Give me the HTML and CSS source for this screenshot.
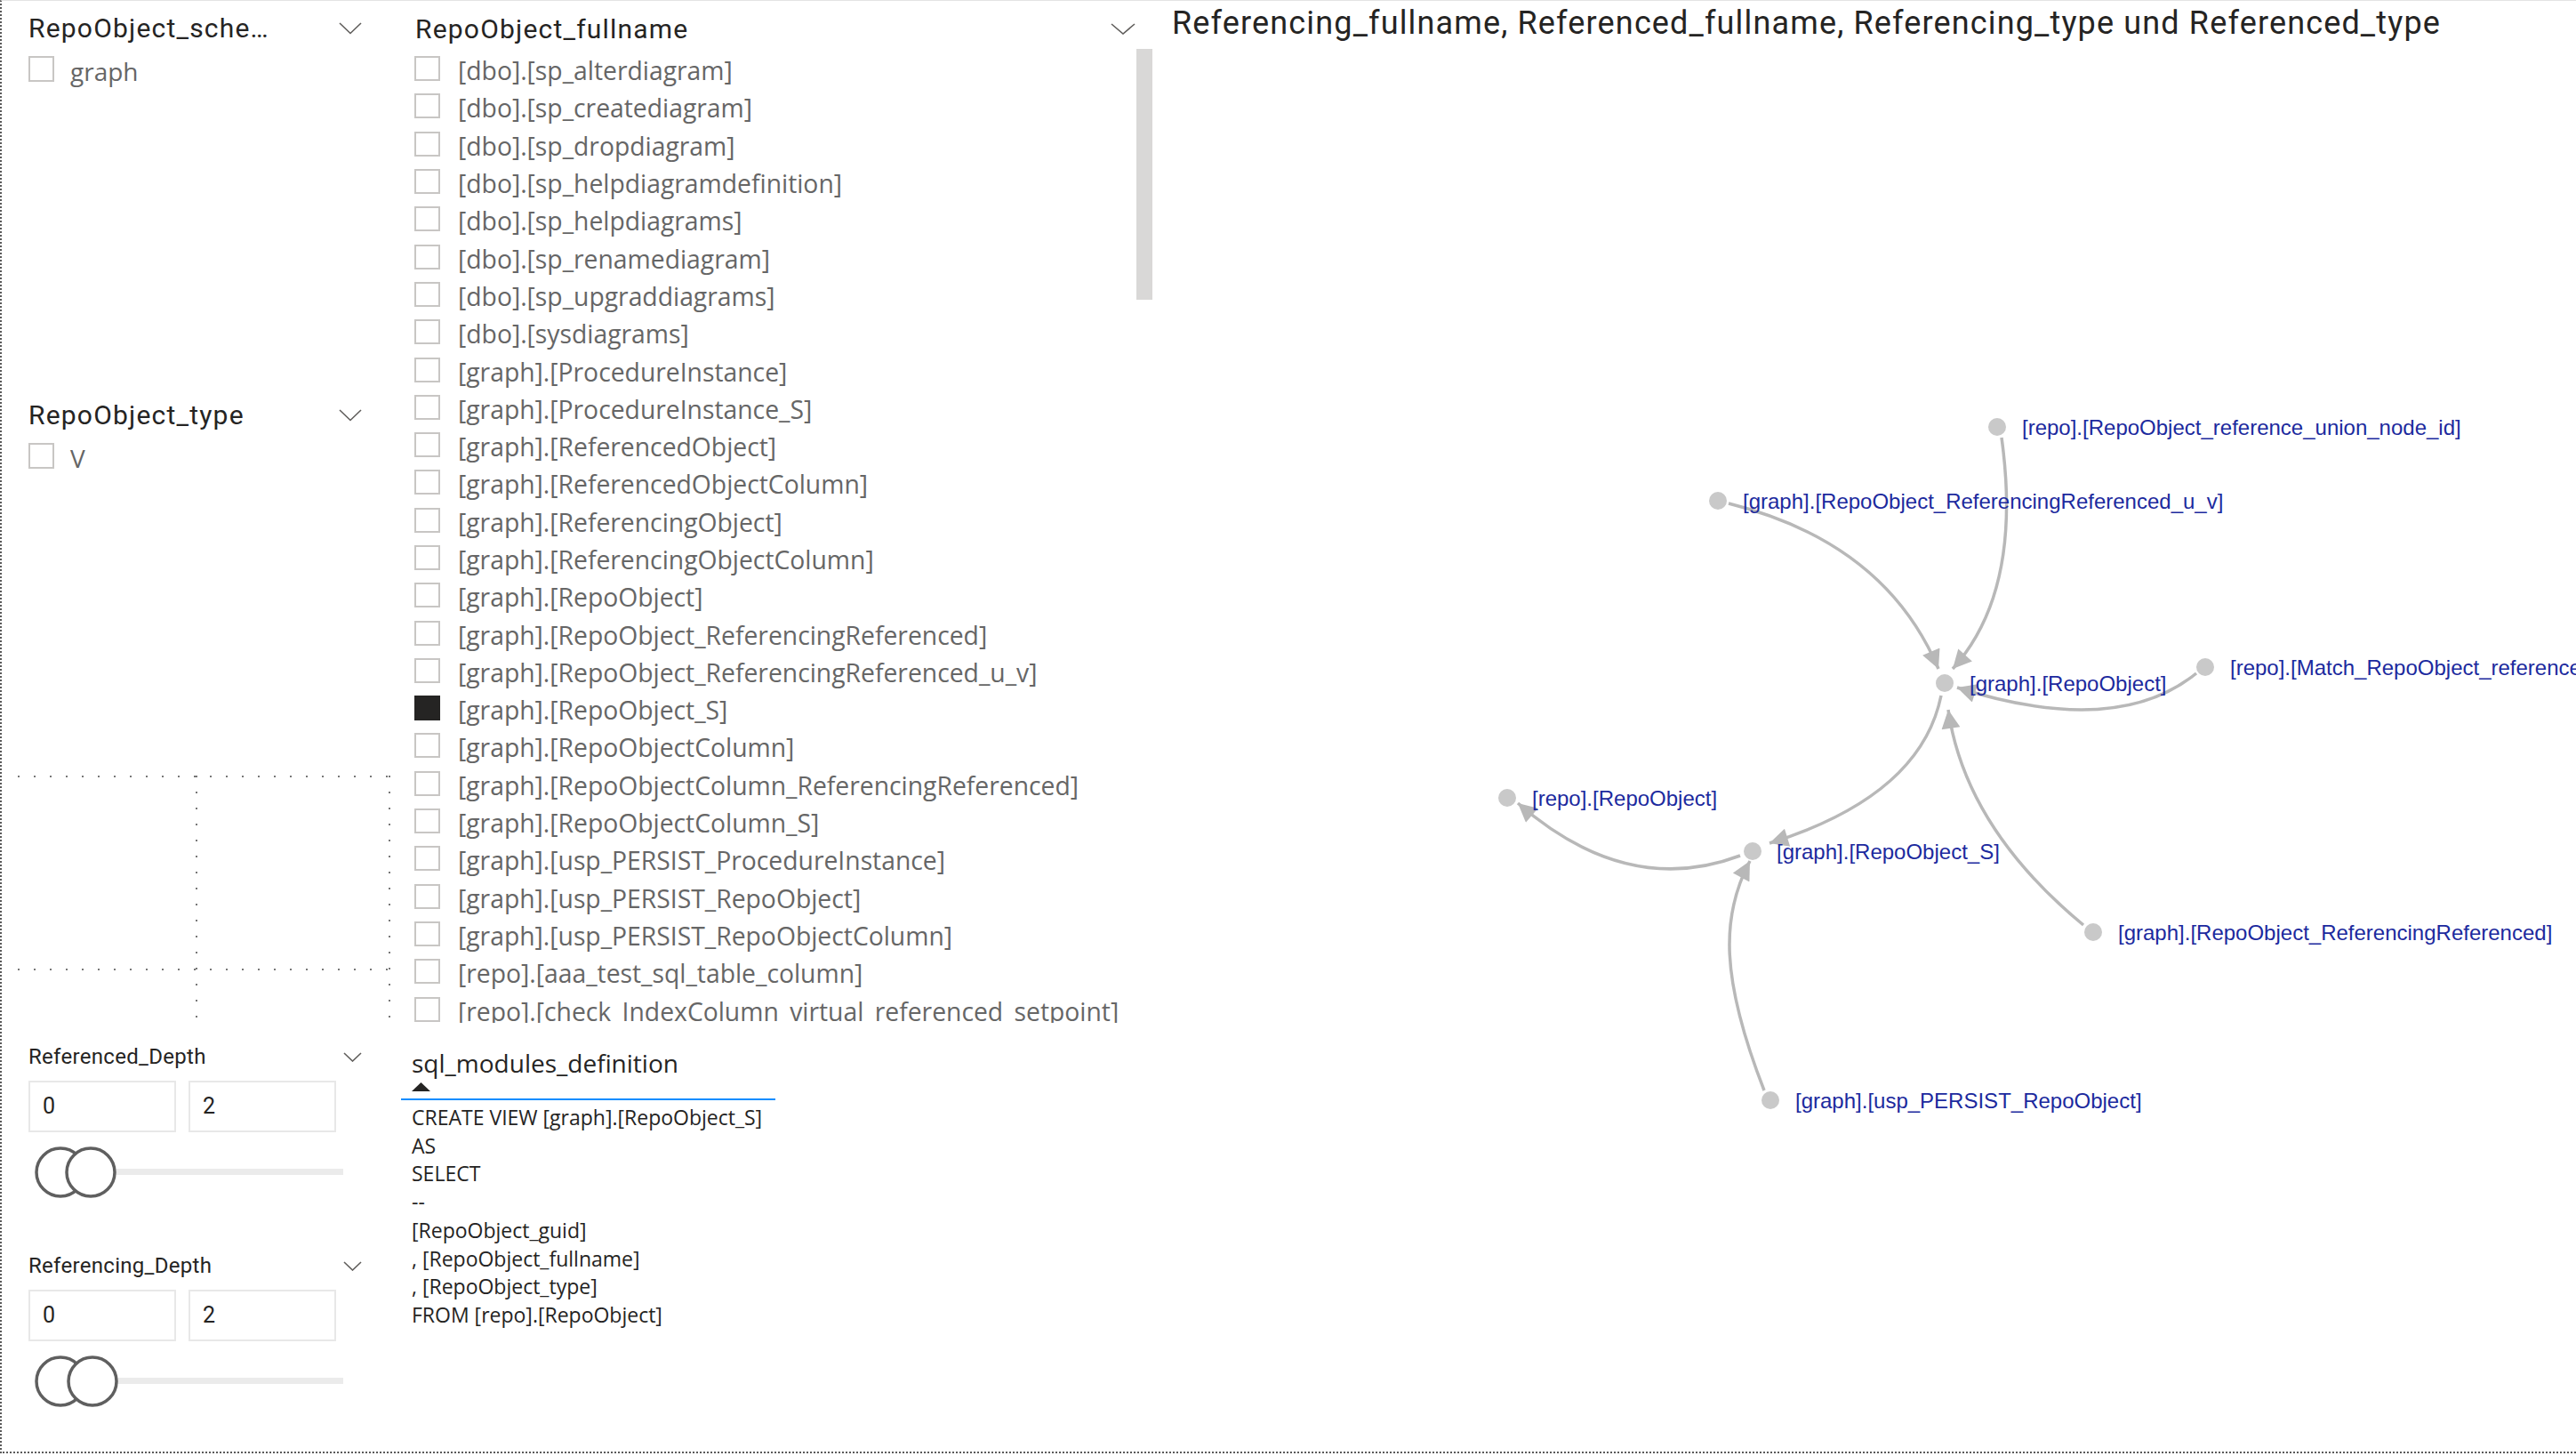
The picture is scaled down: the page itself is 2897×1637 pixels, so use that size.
FILE: index.html
```html
<!DOCTYPE html>
<html lang="de">
<head>
  <meta charset="UTF-8">
  <title>RepoObject Referenzen</title>
  <link rel="stylesheet" href="styles.css">
</head>
<body>
<div class="report">

  <!-- left column: slicers -->
  <div class="col-left">
    <section class="slicer s-schema">
      <div class="slicer-head">
        <span class="slicer-title">RepoObject_sche…</span>
        <svg class="chev" width="26" height="14" viewBox="0 0 26 14"><polyline points="1,1 13,12.5 25,1"/></svg>
      </div>
      <div class="item"><span class="box"></span><span class="item-text">graph</span></div>
    </section>

    <section class="slicer s-type">
      <div class="slicer-head">
        <span class="slicer-title">RepoObject_type</span>
        <svg class="chev" width="26" height="14" viewBox="0 0 26 14"><polyline points="1,1 13,12.5 25,1"/></svg>
      </div>
      <div class="item"><span class="box"></span><span class="item-text">V</span></div>
    </section>

    <div class="placeholder"></div>

    <section class="range">
      <div class="range-head">
        <span class="range-title">Referenced_Depth</span>
        <svg class="chev" width="21" height="11" viewBox="0 0 21 11"><polyline points="1,1 10.5,10 20,1"/></svg>
      </div>
      <div class="range-inputs">
        <div class="range-box">0</div>
        <div class="range-box">2</div>
      </div>
      <svg class="slider" width="370" height="62" viewBox="0 0 370 62">
        <rect class="track" x="70" y="27" width="284" height="7"/>
        <circle class="knob" cx="36" cy="31" r="27"/>
        <circle class="knob" cx="70" cy="31" r="27"/>
      </svg>
    </section>

    <section class="range">
      <div class="range-head">
        <span class="range-title">Referencing_Depth</span>
        <svg class="chev" width="21" height="11" viewBox="0 0 21 11"><polyline points="1,1 10.5,10 20,1"/></svg>
      </div>
      <div class="range-inputs">
        <div class="range-box">0</div>
        <div class="range-box">2</div>
      </div>
      <svg class="slider" width="370" height="62" viewBox="0 0 370 62">
        <rect class="track" x="72" y="27" width="282" height="7"/>
        <circle class="knob" cx="36" cy="31" r="27"/>
        <circle class="knob" cx="72" cy="31" r="27"/>
      </svg>
    </section>
  </div>

  <!-- middle column: fullname slicer + table -->
  <div class="col-mid">
    <section class="fullname">
      <div class="fn-head">
        <span class="slicer-title">RepoObject_fullname</span>
        <svg class="chev" width="28" height="13" viewBox="0 0 28 13"><polyline points="1,1 14,12 27,1"/></svg>
      </div>
      <div class="fn-body">
        <div class="fn-list">
          <div class="row"><span class="box"></span><span class="row-text">[dbo].[sp_alterdiagram]</span></div>
          <div class="row"><span class="box"></span><span class="row-text">[dbo].[sp_creatediagram]</span></div>
          <div class="row"><span class="box"></span><span class="row-text">[dbo].[sp_dropdiagram]</span></div>
          <div class="row"><span class="box"></span><span class="row-text">[dbo].[sp_helpdiagramdefinition]</span></div>
          <div class="row"><span class="box"></span><span class="row-text">[dbo].[sp_helpdiagrams]</span></div>
          <div class="row"><span class="box"></span><span class="row-text">[dbo].[sp_renamediagram]</span></div>
          <div class="row"><span class="box"></span><span class="row-text">[dbo].[sp_upgraddiagrams]</span></div>
          <div class="row"><span class="box"></span><span class="row-text">[dbo].[sysdiagrams]</span></div>
          <div class="row"><span class="box"></span><span class="row-text">[graph].[ProcedureInstance]</span></div>
          <div class="row"><span class="box"></span><span class="row-text">[graph].[ProcedureInstance_S]</span></div>
          <div class="row"><span class="box"></span><span class="row-text">[graph].[ReferencedObject]</span></div>
          <div class="row"><span class="box"></span><span class="row-text">[graph].[ReferencedObjectColumn]</span></div>
          <div class="row"><span class="box"></span><span class="row-text">[graph].[ReferencingObject]</span></div>
          <div class="row"><span class="box"></span><span class="row-text">[graph].[ReferencingObjectColumn]</span></div>
          <div class="row"><span class="box"></span><span class="row-text">[graph].[RepoObject]</span></div>
          <div class="row"><span class="box"></span><span class="row-text">[graph].[RepoObject_ReferencingReferenced]</span></div>
          <div class="row"><span class="box"></span><span class="row-text">[graph].[RepoObject_ReferencingReferenced_u_v]</span></div>
          <div class="row"><span class="box checked"></span><span class="row-text">[graph].[RepoObject_S]</span></div>
          <div class="row"><span class="box"></span><span class="row-text">[graph].[RepoObjectColumn]</span></div>
          <div class="row"><span class="box"></span><span class="row-text">[graph].[RepoObjectColumn_ReferencingReferenced]</span></div>
          <div class="row"><span class="box"></span><span class="row-text">[graph].[RepoObjectColumn_S]</span></div>
          <div class="row"><span class="box"></span><span class="row-text">[graph].[usp_PERSIST_ProcedureInstance]</span></div>
          <div class="row"><span class="box"></span><span class="row-text">[graph].[usp_PERSIST_RepoObject]</span></div>
          <div class="row"><span class="box"></span><span class="row-text">[graph].[usp_PERSIST_RepoObjectColumn]</span></div>
          <div class="row"><span class="box"></span><span class="row-text">[repo].[aaa_test_sql_table_column]</span></div>
          <div class="row"><span class="box"></span><span class="row-text">[repo].[check_IndexColumn_virtual_referenced_setpoint]</span></div>
        </div>
        <div class="fn-scroll"></div>
      </div>
    </section>

    <section class="sqltable">
      <div class="th">
        <div class="th-text">sql_modules_definition</div>
        <svg class="sort" width="21" height="10" viewBox="0 0 21 10"><polygon points="0,10 10.5,0 21,10"/></svg>
      </div>
      <div class="th-line"></div>
      <div class="td">
        <div>CREATE VIEW [graph].[RepoObject_S]</div>
        <div>AS</div>
        <div>SELECT</div>
        <div>--</div>
        <div>[RepoObject_guid]</div>
        <div>, [RepoObject_fullname]</div>
        <div>, [RepoObject_type]</div>
        <div>FROM [repo].[RepoObject]</div>
      </div>
    </section>
  </div>

  <!-- right column: network graph -->
  <div class="col-right">
    <h2 class="visual-title">Referencing_fullname, Referenced_fullname, Referencing_type und Referenced_type</h2>
    <svg class="graph" width="1597" height="1584" viewBox="1300 48 1597 1584">
      <defs>
        <marker id="arrow" viewBox="0 0 10 10" refX="10" refY="5" markerWidth="26" markerHeight="21" markerUnits="userSpaceOnUse" orient="auto">
          <path d="M0,0 L10,5 L0,10 z" class="arrow-head"/>
        </marker>
      </defs>
      <g class="edges">
        <path d="M1944,566 Q2120,610 2180,752" marker-end="url(#arrow)"/>
        <path d="M2251,492 C2266,600 2252,690 2196,752" marker-end="url(#arrow)"/>
        <path d="M2470,757 Q2380,830 2201,773" marker-end="url(#arrow)"/>
        <path d="M2183,782 Q2160,895 1990,948" marker-end="url(#arrow)"/>
        <path d="M2343,1040 Q2210,930 2191,798" marker-end="url(#arrow)"/>
        <path d="M1957,962 Q1830,1010 1707,903" marker-end="url(#arrow)"/>
        <path d="M1984,1226 C1935,1100 1935,1030 1968,968" marker-end="url(#arrow)"/>
      </g>
      <g class="nodes">
        <circle cx="2246" cy="480" r="10"/>
        <circle cx="1932" cy="563" r="10"/>
        <circle cx="2187" cy="768" r="10"/>
        <circle cx="2480" cy="750" r="10"/>
        <circle cx="1695" cy="897" r="10"/>
        <circle cx="1971" cy="957" r="10"/>
        <circle cx="2354" cy="1048" r="10"/>
        <circle cx="1991" cy="1237" r="10"/>
      </g>
      <g class="labels">
        <text x="2274" y="489">[repo].[RepoObject_reference_union_node_id]</text>
        <text x="1960" y="572">[graph].[RepoObject_ReferencingReferenced_u_v]</text>
        <text x="2215" y="777">[graph].[RepoObject]</text>
        <text x="2508" y="759">[repo].[Match_RepoObject_referenced_UspPersist]</text>
        <text x="1723" y="906">[repo].[RepoObject]</text>
        <text x="1998" y="966">[graph].[RepoObject_S]</text>
        <text x="2382" y="1057">[graph].[RepoObject_ReferencingReferenced]</text>
        <text x="2019" y="1246">[graph].[usp_PERSIST_RepoObject]</text>
      </g>
    </svg>
  </div>

</div>
</body>
</html>
```

FILE: styles.css
```css
html, body { margin: 0; padding: 0; background: #fff; }
* { box-sizing: border-box; }

.report {
  width: 2897px;
  height: 1634px;
  display: grid;
  grid-template-columns: 438px 860px 1fr;
  border-top: 1px solid #e3e3e3;
  border-left: 2px dotted #5a5a5a;
  border-bottom: 2px dotted #5a5a5a;
  overflow: hidden;
  color: #252423;
}

/* ---------- shared slicer bits ---------- */
.slicer-title { font-family: Roboto, "Liberation Sans", sans-serif; font-size: 30px; letter-spacing: 1.2px; color: #252423; }
.chev { display: block; flex: none; }
.chev polyline { fill: none; stroke: #605e5c; stroke-width: 1.6; }
.box { display: inline-block; flex: none; width: 29px; height: 28px; border: 2px solid #c8c6c4; background: #fff; }
.box.checked { background: #252423; border-color: #252423; }

/* ---------- left column ---------- */
.col-left { display: flex; flex-direction: column; }
.slicer { padding: 13px 33px 0 30px; }
.s-schema { height: 435px; }
.s-type { height: 436px; }
.slicer-head { display: flex; justify-content: space-between; align-items: center; height: 36px; line-height: 36px; }
.slicer .box { height: 29px; }
.item { display: flex; align-items: center; gap: 18px; margin-top: 13px; height: 29px; }
.item-text { font-family: "Open Sans", "Noto Sans", sans-serif; font-size: 28px; color: #666; line-height: 28px; padding-top: 4px; }

.placeholder {
  margin-left: 18px;
  width: 420px;
  height: 288px;
  background:
    linear-gradient(to right, #777 2px, transparent 2px) 0 0 / 18px 2px repeat-x,
    linear-gradient(to right, #777 2px, transparent 2px) 0 217px / 18px 2px repeat-x,
    linear-gradient(to bottom, #777 2px, transparent 2px) 200px 18px / 2px 18px repeat-y,
    linear-gradient(to bottom, #777 2px, transparent 2px) 417px 18px / 2px 18px repeat-y;
}

.range { height: 235px; padding: 12px 33px 0 30px; }
.range-head { display: flex; justify-content: space-between; align-items: center; height: 32px; }
.range-title { font-family: Roboto, "Liberation Sans", sans-serif; font-size: 24px; letter-spacing: 0.3px; }
.range-inputs { display: flex; gap: 14px; margin-top: 11px; }
.range-box {
  width: 166px; height: 58px;
  border: 2px solid #e8e8e8;
  padding-left: 14px;
  font-family: Roboto, "Liberation Sans", sans-serif; font-size: 25px; line-height: 54px;
}
.slider { display: block; margin-top: 14px; }
.track { fill: #ebebeb; }
.knob { fill: #fff; stroke: #5f5f5f; stroke-width: 3.5; }

/* ---------- middle column ---------- */
.col-mid { display: flex; flex-direction: column; }
.fullname { height: 1150px; }
.fn-head { display: flex; justify-content: space-between; align-items: center; height: 36px; margin-top: 13px; padding: 0 23px 0 27px; }
.fn-body { display: flex; height: 1095px; margin-top: 5px; }
.fn-list { flex: 1; overflow: hidden; padding: 1px 0 0 26px; }
.row {
  display: flex; align-items: center; gap: 20px;
  height: 42.3px; white-space: nowrap;
  font-family: "Open Sans", "Noto Sans", sans-serif; font-size: 28.3px; color: #666;
}
.row-text { padding-top: 4px; }
.fn-scroll { flex: none; width: 18px; height: 282px; margin-right: 4px; background: #d9d8d7; }

.sqltable { padding: 25px 0 0 11px; }
.th { padding-left: 12px; }
.th-text { font-family: "Open Sans", "Noto Sans", sans-serif; font-size: 28px; line-height: 38px; color: #252423; }
.sort { display: block; margin-top: 3px; }
.sort polygon { fill: #252423; }
.th-line { width: 421px; height: 2px; margin-top: 8px; background: #118dff; }
.td { padding: 4px 0 0 12px; font-family: "Open Sans", "Noto Sans", sans-serif; font-size: 23px; line-height: 31.7px; color: #252423; }

/* ---------- right column ---------- */
.col-right { display: flex; flex-direction: column; overflow: hidden; }
.visual-title {
  margin: 0; height: 47px; padding: 3px 0 0 18px;
  font-family: Roboto, "Liberation Sans", sans-serif; font-weight: 400;
  font-size: 36px; line-height: 44px; letter-spacing: 1.15px; white-space: nowrap; color: #252423;
}
.graph { display: block; flex: none; }
.edges path { fill: none; stroke: #b8b8b8; stroke-width: 3.5; }
.arrow-head { fill: #b8b8b8; }
.nodes circle { fill: #c9c9c9; }
.labels text { font-family: "Liberation Sans", Arial, sans-serif; font-size: 24px; fill: #1c2a9e; }
```
